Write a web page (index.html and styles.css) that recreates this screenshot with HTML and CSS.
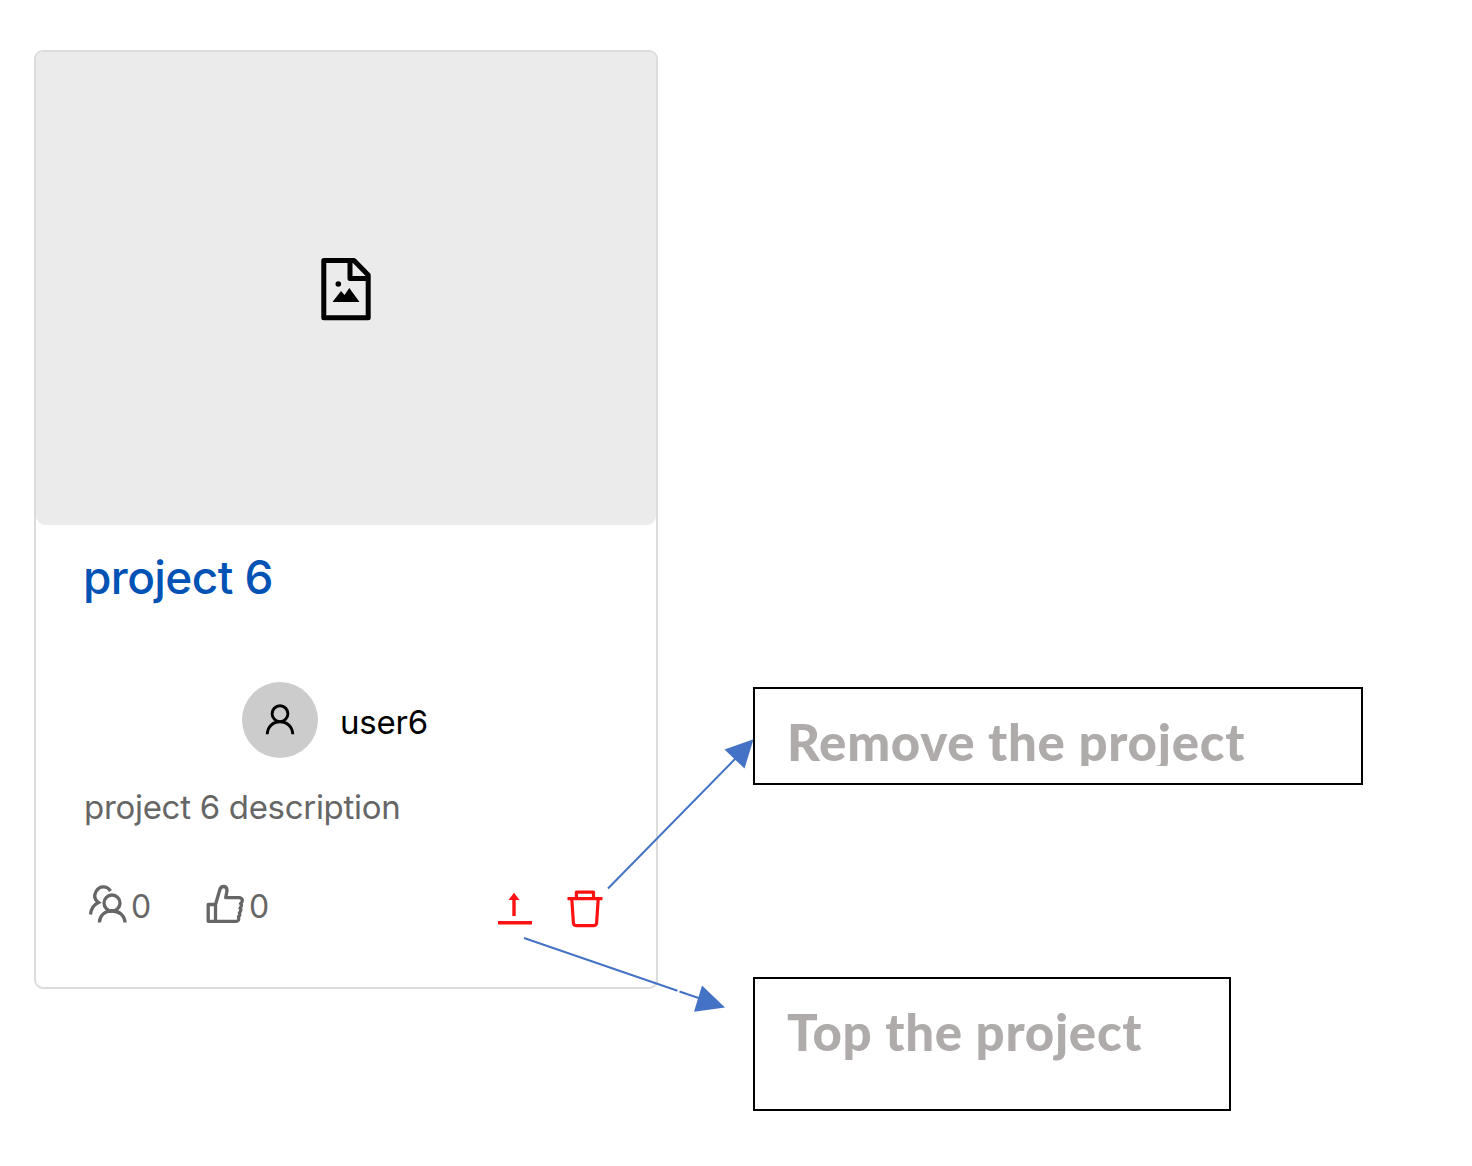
FILE: index.html
```html
<!DOCTYPE html>
<html lang="en">
<head>
<meta charset="utf-8">
<title>Project card</title>
<link rel="stylesheet" href="styles.css">
</head>
<body>
<main class="page">
  <article class="card">
    <div class="cover">
      <svg class="file-icon" viewBox="320 256 52 66" width="52" height="66">
        <path d="M323.800 260.500H354L368.200 275V317.700H323.800ZM350 260.500V278.500H368.200" fill="none" stroke="#000" stroke-width="5" stroke-linejoin="round"/>
        <circle cx="338.300" cy="284" r="2.800"/>
        <path d="M332.500 302L341 291L344.500 295L349.300 288L359.500 302Z"/>
      </svg>
    </div>
    <div class="content">
      <h1 class="title">project 6</h1>
      <div class="owner">
        <span class="avatar">
          <svg viewBox="264 704 32 32" width="32" height="32">
            <g fill="none" stroke="#000" stroke-width="2.900"><circle cx="280" cy="713.700" r="7.900"/><path d="M267.200 734.300C267.600 726.500 273 721.800 280 721.800S292.400 726.500 292.800 734.300"/></g>
          </svg>
        </span>
        <span class="name">user6</span>
      </div>
      <p class="description">project 6 description</p>
      <div class="footer">
        <span class="stat members">
          <svg viewBox="88 883 40 42" width="40" height="42">
            <g fill="none" stroke="#666" stroke-width="3.300"><circle cx="112" cy="903" r="8"/><path d="M99.400 922.500C99.800 915 105 911 112 911S124.600 915 125 922.500"/><path d="M110.500 891C107 885.500 99.500 885.300 96 891.500C93.700 896 94.800 900 98.500 902.500C94 904.500 91 908.500 90.500 914.500"/></g>
          </svg>
          <span>0</span>
        </span>
        <span class="stat likes">
          <svg viewBox="206 883 40 42" width="40" height="42">
            <g fill="none" stroke="#666" stroke-width="3.300" stroke-linejoin="round"><path d="M208.200 904.500H215.500L220 889Q221.200 886.300 224 886.500Q227 886.800 227 890.500L225.700 897.700H239.500Q242.500 898.500 242.300 901Q242.300 902.300 240.500 903.500Q242.700 905 240 908Q242 910 239.300 913Q240.700 915 238.500 916.500Q239.600 921.300 236.300 921.300H208.200ZM215.500 904.500V921"/></g>
          </svg>
          <span>0</span>
        </span>
        <svg class="top-action" viewBox="497 889 36 40" width="36" height="40">
          <path d="M498 922.700H532" stroke="#f11" stroke-width="3.400"/><path d="M514 916V899" stroke="#f11" stroke-width="3.400"/><path d="M508.500 900L514 892.800L519.500 900Z" fill="#f11"/>
        </svg>
        <svg class="remove-action" viewBox="567 889 36 40" width="36" height="40">
          <g fill="none" stroke="#f11" stroke-width="3.200" stroke-linejoin="round"><path d="M567.500 898.600H602.500M576.400 898V892.100H593.500V898"/><path d="M571.800 899L573.400 923Q573.600 925.600 576 925.600H594Q596.400 925.600 596.600 923L598.200 899"/></g>
        </svg>
      </div>
    </div>
  </article>
  <aside class="notes">
    <div class="note note-remove"><span class="note-text">Remove the project</span></div>
    <div class="note note-top"><span class="note-text">Top the project</span></div>
  </aside>
  <svg class="arrows" viewBox="0 0 1472 1166" width="1472" height="1166">
    <g stroke="#4472c4" stroke-width="2"><path d="M608 888.500L736 758"/><path d="M524 938L677.500 990.700M679.500 991.500L700 998.500"/></g>
    <g fill="#4472c4"><path d="M753.500 739.300L724.500 749.500L744.500 768.500Z"/><path d="M725 1007.500L702 985.500L694 1011.700Z"/></g>
  </svg>
</main>
</body>
</html>
```

FILE: styles.css
```css
* { box-sizing: border-box; }
body { margin: 0; background: #fff; font-family: Inter, sans-serif; }
svg { display: block; flex: none; }

.page {
  position: relative;
  display: flex;
  align-items: flex-start;
  width: 1472px;
  height: 1166px;
  padding: 50px 0 0 34px;
  overflow: hidden;
}

.card {
  width: 624px;
  height: 939px;
  border: 2px solid #dcdcdc;
  border-radius: 9px;
}
.cover {
  display: flex;
  align-items: center;
  justify-content: center;
  height: 473px;
  border-radius: 7px 7px 9px 9px;
  background: #ebebeb;
}
.content { padding: 24px 48px 0; }
.title {
  margin: 0 0 0 -1px;
  font-size: 46px;
  font-weight: 500;
  line-height: 56px;
  letter-spacing: -0.6px;
  color: #0052b4;
}
.owner {
  display: flex;
  align-items: center;
  gap: 22px;
  margin: 77px 0 0 158px;
  height: 76px;
}
.avatar {
  display: flex;
  align-items: center;
  justify-content: center;
  width: 76px;
  height: 76px;
  border-radius: 50%;
  background: #ccc;
}
.name { padding-top: 4px; font-size: 33px; letter-spacing: -0.2px; color: #000; }
.description {
  margin: 29px 0 0;
  font-size: 33px;
  line-height: 40px;
  letter-spacing: -0.3px;
  color: #666;
}
.footer {
  display: flex;
  align-items: center;
  height: 42px;
  margin: 56px 0 0 4px;
  font-size: 32px;
  color: #666;
}
.stat { display: flex; align-items: center; gap: 3px; }
.stat span { width: 21px; padding-top: 5px; }
.likes { margin-left: 54px; }
.top-action { margin: 10px 0 0 227px; }
.remove-action { margin: 10px 0 0 34px; }

.notes {
  display: flex;
  flex-direction: column;
  gap: 192px;
  padding: 637px 0 0 95px;
}
.note {
  border: 2px solid #000;
  background: #fff;
  padding: 21px 0 0 32px;
  font-family: Lato, sans-serif;
  font-size: 51px;
  font-weight: 900;
  line-height: 64px;
  letter-spacing: 0.7px;
  white-space: nowrap;
  color: #afabab;
}
.note-remove { width: 610px; height: 98px; }
.note-top { width: 478px; height: 134px; }
.note-text { display: block; }
.note-remove .note-text { height: 56px; overflow: hidden; }

.arrows { position: absolute; inset: 0; pointer-events: none; }
```
